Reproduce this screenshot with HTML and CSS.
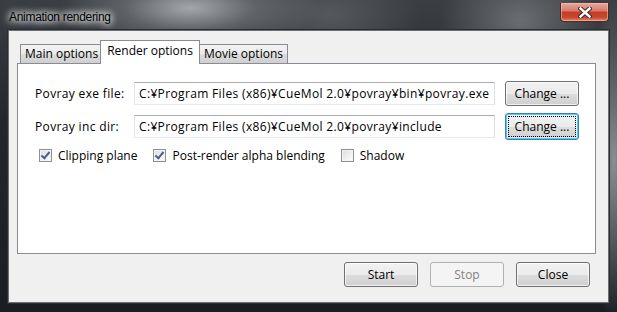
FILE: index.html
```html
<!DOCTYPE html>
<html lang="ja">
<head>
    <meta charset="UTF-8">
    <title>Animation rendering</title>
    <link rel="stylesheet" href="styles.css">
</head>
<body>
    <div class="window">
        <!-- Barra de título -->
        <div class="titlebar">
            <span class="title">Animation rendering</span>
            <span class="close-btn">
                <svg width="14" height="11" viewBox="0 0 14 11">
                    <path d="M2.5 1.5 L11.5 9.5 M11.5 1.5 L2.5 9.5" stroke="#3a2a28" stroke-width="4.4" stroke-linecap="square"/>
                    <path d="M2.5 1.5 L11.5 9.5 M11.5 1.5 L2.5 9.5" stroke="#fff" stroke-width="2.4" stroke-linecap="square"/>
                </svg>
            </span>
        </div>

        <div class="client">
            <div class="tabs">
                <div class="tab">Main options</div>
                <div class="tab active">Render options</div>
                <div class="tab">Movie options</div>
            </div>

            <div class="panel">
                <div class="row">
                    <span class="label">Povray exe file:</span>
                    <div class="input">C:¥Program Files (x86)¥CueMol 2.0¥povray¥bin¥povray.exe</div>
                    <button class="btn">Change ...</button>
                </div>
                <div class="row">
                    <span class="label">Povray inc dir:</span>
                    <div class="input">C:¥Program Files (x86)¥CueMol 2.0¥povray¥include</div>
                    <button class="btn focused"><span>Change ...</span></button>
                </div>
                <div class="checks">
                    <label class="check"><span class="box checked"></span>Clipping plane</label>
                    <label class="check"><span class="box checked"></span>Post-render alpha blending</label>
                    <label class="check"><span class="box"></span>Shadow</label>
                </div>
            </div>

            <div class="actions">
                <button class="btn">Start</button>
                <button class="btn disabled">Stop</button>
                <button class="btn">Close</button>
            </div>
        </div>
    </div>
</body>
</html>
```

FILE: styles.css
```css
body {
    margin: 0;
    font-family: "Open Sans", "Noto Sans CJK JP", sans-serif;
    font-size: 12px;
    background: #1c1f23;
}

.window {
    width: 617px;
    height: 312px;
    box-sizing: border-box;
    padding: 0 8px 9px 8px;
    display: flex;
    flex-direction: column;
    background:
        radial-gradient(ellipse 130px 45px at 190px 8px, #a4a7aa 0%, rgba(120, 124, 128, 0.6) 50%, rgba(0, 0, 0, 0) 100%),
        radial-gradient(ellipse 90px 50px at 330px 14px, #55595e 0%, rgba(0, 0, 0, 0) 100%),
        radial-gradient(ellipse 80px 60px at 520px 20px, #6a6e72 0%, rgba(0, 0, 0, 0) 100%),
        radial-gradient(ellipse 30px 160px at 614px 160px, #8c9095 0%, rgba(0, 0, 0, 0) 100%),
        linear-gradient(180deg, #3b3f44 0%, #23272c 40%, #1a1d21 100%);
}

.titlebar {
    height: 30px;
    display: flex;
    align-items: flex-start;
    justify-content: space-between;
}

.title {
    margin: 10px 0 0 1px;
    font-family: "Liberation Sans", sans-serif;
    font-size: 12px;
    letter-spacing: -0.3px;
    color: #000;
    text-shadow: 0 0 6px #fff, 0 0 8px #fff, 0 0 10px rgba(255, 255, 255, 0.8);
}

.close-btn {
    margin: 3px 0 0 0;
    width: 47px;
    height: 18px;
    border: 1px solid #4a2a26;
    border-top: none;
    border-radius: 0 0 4px 4px;
    display: flex;
    align-items: center;
    justify-content: center;
    background: linear-gradient(180deg, #e7a89c 0%, #d47a68 45%, #c23c26 50%, #c8482f 80%, #e08a6e 100%);
    box-shadow: inset 0 0 0 1px rgba(255, 200, 190, 0.5);
}

.client {
    flex: 1;
    background: #f0f0f0;
    border: 1px solid #6b6f74;
    box-shadow: 0 0 0 1px #2a2e33;
    padding: 9px 12px 15px 8px;
    display: flex;
    flex-direction: column;
}

.tabs {
    display: flex;
    align-items: flex-end;
    height: 23px;
    padding-left: 3px;
}

.tab {
    height: 18px;
    padding: 0 4px;
    line-height: 18px;
    border: 1px solid #898c95;
    border-bottom: none;
    margin-right: -1px;
    background: linear-gradient(180deg, #f2f2f2 0%, #ebebeb 50%, #dddddd 51%, #cfcfcf 100%);
    color: #000;
}

.tab.active {
    height: 23px;
    line-height: 19px;
    padding: 0 6px;
    margin: 0 -1px -1px -2px;
    background: #fff;
    position: relative;
    z-index: 1;
}

.panel {
    flex: 1;
    background: #fff;
    border: 1px solid #898c95;
    padding: 17px 16px 0 17px;
}

.row {
    display: flex;
    align-items: center;
    height: 25px;
    margin-bottom: 8px;
    letter-spacing: 0.35px;
}

.label {
    width: 99px;
    color: #000;
}

.input {
    width: 355px;
    height: 21px;
    line-height: 21px;
    padding-left: 4px;
    border: 1px solid #abadb3;
    border-color: #abadb3 #dbdfe6 #e3e9ef #e2e3ea;
    white-space: nowrap;
    overflow: hidden;
    margin-right: 10px;
}

.btn {
    width: 74px;
    height: 25px;
    padding: 0;
    font-family: inherit;
    font-size: 12px;
    letter-spacing: 0;
    color: #000;
    border: 1px solid #707070;
    border-radius: 3px;
    background: linear-gradient(180deg, #f2f2f2 0%, #ebebeb 50%, #dddddd 51%, #cfcfcf 100%);
    box-shadow: inset 0 0 0 1px rgba(255, 255, 255, 0.7);
}

.btn.focused {
    height: 27px;
    border-color: #3c7fb1;
    box-shadow: inset 0 0 0 1px #48d0f9, inset 0 0 0 2px rgba(255, 255, 255, 0.5);
    padding: 2px;
}

.btn.focused span {
    display: block;
    height: 100%;
    box-sizing: border-box;
    line-height: 19px;
    border: 1px dotted #000;
}

.btn.disabled {
    color: #838383;
    border-color: #adb2b5;
    background: #f4f4f4;
    box-shadow: none;
}

.checks {
    display: flex;
    align-items: center;
    margin-top: 5px;
    padding-left: 4px;
}

.check {
    display: flex;
    align-items: center;
    margin-right: 16px;
}

.box {
    width: 11px;
    height: 11px;
    border: 1px solid #8e8f8f;
    margin-right: 6px;
    background: linear-gradient(135deg, #dcdcdc 0%, #f4f4f4 70%, #fff 100%);
    box-shadow: inset 0 0 0 1px #f4f4f4;
    position: relative;
}

.box.checked::after {
    content: "";
    position: absolute;
    left: 3px;
    top: 0;
    width: 3px;
    height: 7px;
    border: solid #4a5f97;
    border-width: 0 2px 2px 0;
    transform: rotate(40deg);
}

.actions {
    display: flex;
    justify-content: flex-end;
    gap: 12px;
    margin: 8px 6px 0 0;
}
```
